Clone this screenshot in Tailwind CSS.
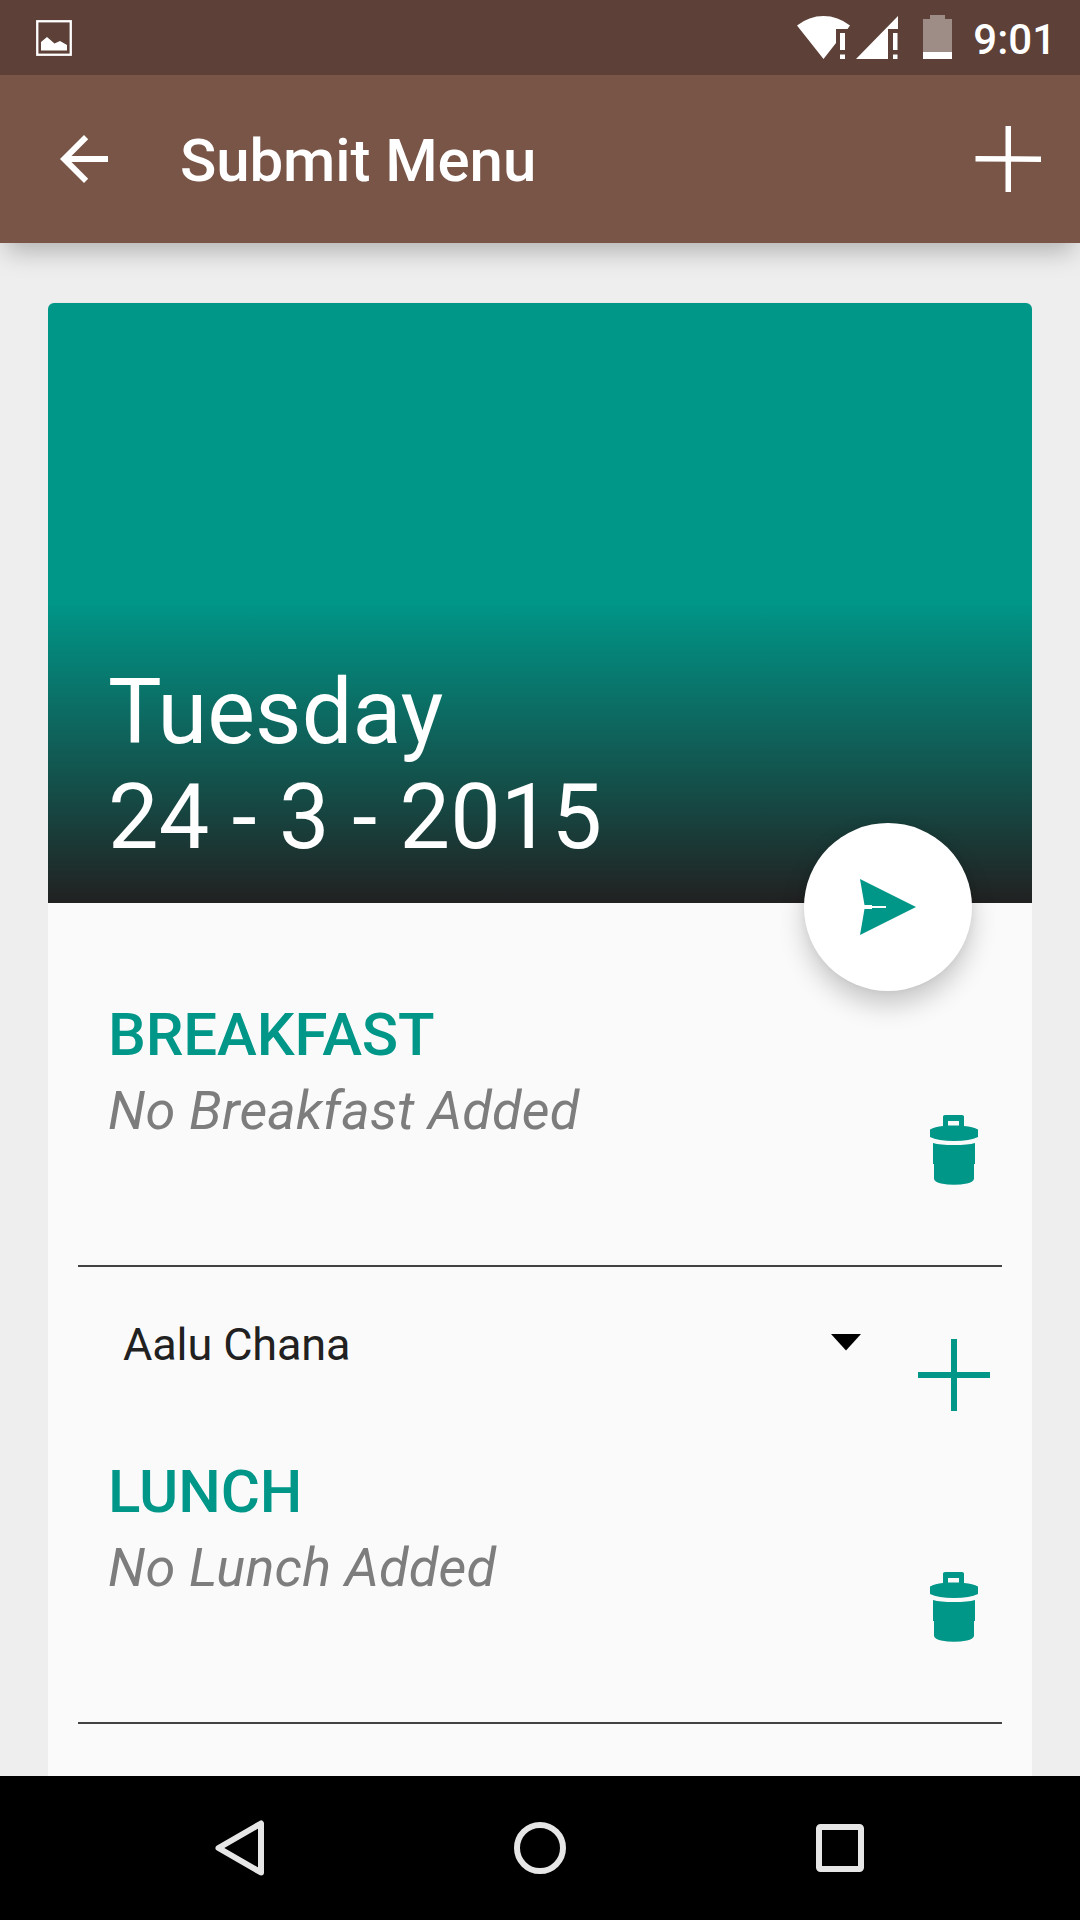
<!DOCTYPE html>
<html lang="en">
<head>
<meta charset="utf-8">
<title>Submit Menu</title>
<script src="https://cdn.jsdelivr.net/npm/@tailwindcss/browser@4"></script>
</head>
<body class="w-[1080px] h-[1920px] flex flex-col overflow-hidden bg-[#eeeeee] font-['Roboto',sans-serif]">

<header class="relative z-10 shrink-0 shadow-[0_14px_24px_-6px_rgba(0,0,0,0.26)]">
  <div class="h-[75px] bg-[#5d4037] flex items-start justify-between pl-9 pr-6 text-white">
    <svg class="mt-5" width="36" height="36" viewBox="0 0 36 36" fill="none">
      <rect x="1.25" y="1.25" width="33.5" height="33.5" stroke="#fff" stroke-width="2.3"/>
      <path d="M5 22l6-5 7.500 6.500 5.500-2.500 7 4v5.500H5z" fill="#fff"/>
    </svg>
    <div class="flex items-start">
      <svg class="mt-4" width="53" height="43" viewBox="0 0 53 43" fill="#fff">
        <path d="M0 9.500Q12 0 26.500 0T53 9.500L50.500 13H39v14L26.500 43z"/>
        <path d="M43 17h5v17h-5zM43 38.500h5V43h-5z"/>
      </svg>
      <svg class="mt-4 ml-[6px]" width="42" height="43" viewBox="0 0 42 43" fill="#fff">
        <path d="M0 43L42 0v13H32v30z"/>
        <path d="M37 17h4.500v17H37zM37 38.500h4.500V43H37z"/>
      </svg>
      <svg class="mt-[15px] ml-[25px]" width="29" height="44" viewBox="0 0 29 44">
        <path d="M7 0h15v4h7v33H0V4h7z" fill="#9e8c87"/>
        <path d="M0 37h29v7H0z" fill="#fff"/>
      </svg>
      <span class="ml-[21px] mt-[15px] text-[42px] leading-[50px] font-medium whitespace-nowrap">9:01</span>
    </div>
  </div>
  <div class="h-[168px] bg-[#795548] flex items-center pl-[60px] pr-[39px]">
    <svg width="48" height="48" viewBox="0 0 48 48" fill="#fff">
      <path d="M48 21H11.500L28.200 4.200 24 0 0 24l24 24 4.200-4.200L11.500 27H48z"/>
    </svg>
    <h1 class="ml-[72px] pt-1 grow text-[60px] leading-[70px] tracking-[-0.1px] font-medium text-white">Submit Menu</h1>
    <svg width="66" height="66" viewBox="0 0 66 66" fill="#fff">
      <path d="M30.500 0h5.500v66h-5.500z"/><path d="M.5 30l65.500.5v5.500l-65.500-.5z"/>
    </svg>
  </div>
</header>

<main class="h-[1533px] shrink-0 px-12 pt-[60px] overflow-hidden">
  <article class="relative h-[1600px] bg-[#fafafa] rounded-t-md shadow-[0_-1px_1px_-1px_rgba(0,0,0,0.2)]">
    <div class="h-[600px] rounded-t-md bg-[linear-gradient(to_bottom,#009688_50%,#212121)] flex flex-col justify-end pl-[60px] pb-[33px] text-[90px] leading-[105px] tracking-[0.08px] text-white">
      <p>Tuesday</p>
      <p>24 - 3 - 2015</p>
    </div>
    <!-- floating submit button over the header's lower edge -->
    <button class="absolute left-[756px] top-[520px] size-[168px] rounded-full bg-white flex items-center justify-center shadow-[0_14px_26px_rgba(0,0,0,0.2),0_0_8px_rgba(0,0,0,0.06)]">
      <svg class="-mt-px" width="56" height="56" viewBox="0 0 56 56" fill="#009688">
        <path d="M0 0l56 28L0 56l4.500-26H12v-1h14v-2H12v-1H4.500z"/>
      </svg>
    </button>

    <div class="pt-[97px] px-[30px]">
      <section class="h-[457px]">
        <div class="h-[267px] border-b-2 border-[#424242] flex justify-between pl-[30px] pr-6">
          <div>
            <h2 class="text-[60px] leading-[69px] tracking-[-0.15px] font-medium text-[#009688]">BREAKFAST</h2>
            <p class="mt-[10px] text-[54px] leading-[64px] tracking-[0.2px] italic text-[#7d7d7d]">No Breakfast Added</p>
          </div>
          <svg class="mt-[115px]" width="48" height="70" viewBox="0 0 48 70" fill="#009688">
            <path fill-rule="evenodd" d="M13 11V1.500Q13 0 15 0H32Q34 0 34 1.500V11Q43 11.500 48 14.500V22Q40 26 24 26T0 22V14.500Q5 11.500 13 11zM18 6v4.500h11V6z"/>
            <path d="M3 28Q10 30 24 30T45 28V49H44V64Q43 67 37 68.500 24 71 11 68.500 5 67 4 64V49H3z"/>
          </svg>
        </div>
        <div class="flex items-start pl-[45px] pr-3 pt-12">
          <span class="grow text-[45px] leading-[60px] tracking-[-0.12px] text-[#212121]">Aalu Chana</span>
          <svg class="mt-[19px]" width="30" height="17" viewBox="0 0 30 17"><path d="M0 0h30L15 16.500z"/></svg>
          <svg class="ml-[57px] mt-6" width="72" height="72" viewBox="0 0 72 72" fill="#009688"><path d="M33 0h6v33h33v6H39v33h-6V39H0v-6h33z"/></svg>
        </div>
      </section>

      <section class="h-[457px]">
        <div class="h-[267px] border-b-2 border-[#424242] flex justify-between pl-[30px] pr-6">
          <div>
            <h2 class="text-[60px] leading-[69px] tracking-[-0.1px] font-medium text-[#009688]">LUNCH</h2>
            <p class="mt-[10px] text-[54px] leading-[64px] tracking-[0.2px] italic text-[#7d7d7d]">No Lunch Added</p>
          </div>
          <svg class="mt-[115px]" width="48" height="70" viewBox="0 0 48 70" fill="#009688">
            <path fill-rule="evenodd" d="M13 11V1.500Q13 0 15 0H32Q34 0 34 1.500V11Q43 11.500 48 14.500V22Q40 26 24 26T0 22V14.500Q5 11.500 13 11zM18 6v4.500h11V6z"/>
            <path d="M3 28Q10 30 24 30T45 28V49H44V64Q43 67 37 68.500 24 71 11 68.500 5 67 4 64V49H3z"/>
          </svg>
        </div>
      </section>
    </div>
  </article>
</main>

<nav class="relative z-10 h-36 shrink-0 bg-black flex items-center justify-between pl-[215px] pr-[216px]">
  <svg width="49" height="56" viewBox="0 0 49 56" fill="none" stroke="#e6e6e6" stroke-width="6" stroke-linejoin="round"><path d="M46 3.500v49L3.500 28z"/></svg>
  <svg width="52" height="52" viewBox="0 0 52 52" fill="none" stroke="#e6e6e6" stroke-width="6"><circle cx="26" cy="26" r="23"/></svg>
  <svg width="48" height="48" viewBox="0 0 48 48" fill="none" stroke="#e6e6e6" stroke-width="6"><rect x="3" y="3" width="42" height="42" rx="1.500"/></svg>
</nav>
</body>
</html>
